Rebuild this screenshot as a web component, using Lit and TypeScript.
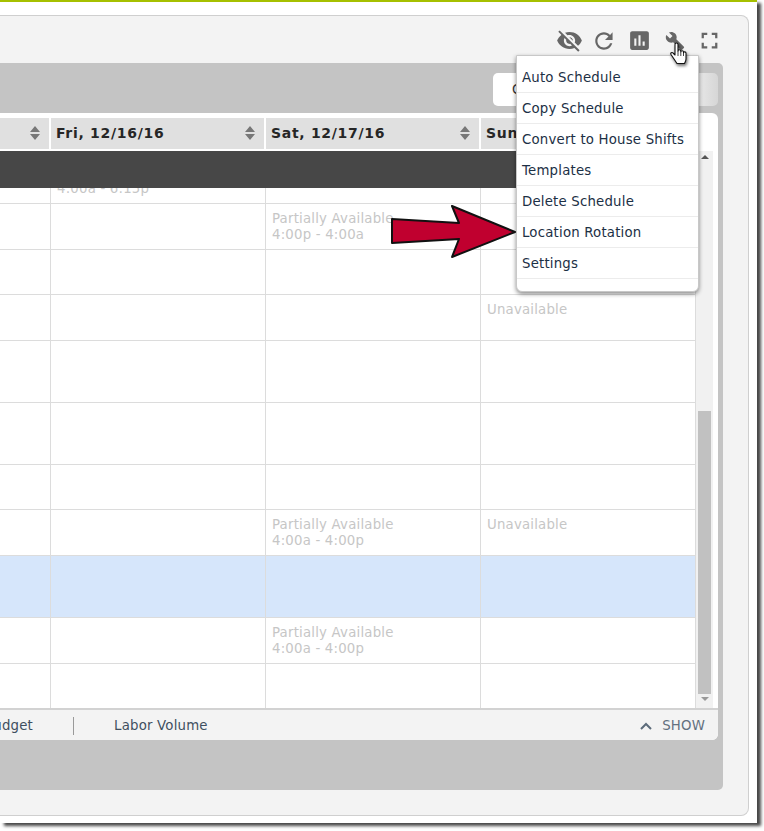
import { LitElement, html, css, svg, unsafeCSS } from "lit";
import { customElement } from "lit/decorators.js";

const FONT = unsafeCSS(`"DejaVu Sans", Verdana, sans-serif`);

const PA1 = ["Partially Available", "4:00p - 4:00a"];
const PA2 = ["Partially Available", "4:00a - 4:00p"];
const UN = ["Unavailable"];

type Row = { h: number; fri?: string[]; sat?: string[]; sun?: string[]; hi?: boolean };
const ROWS: Row[] = [
  { h: 46, fri: ["Partially Available", "4:00a - 6:15p"] },
  { h: 46, sat: PA1 },
  { h: 45 },
  { h: 46, sun: UN },
  { h: 62 },
  { h: 62 },
  { h: 45 },
  { h: 46, sat: PA2, sun: UN },
  { h: 62, hi: true },
  { h: 46, sat: PA2 },
  { h: 45 },
];

const MENU = ["Auto Schedule", "Copy Schedule", "Convert to House Shifts", "Templates", "Delete Schedule", "Location Rotation", "Settings"];

const ICONS: [string, number, string][] = [
  ["M12 7c2.76 0 5 2.24 5 5 0 .65-.13 1.26-.36 1.83l2.92 2.92c1.51-1.26 2.7-2.89 3.43-4.75-1.73-4.39-6-7.5-11-7.5-1.4 0-2.74.25-3.98.7l2.16 2.16C10.74 7.13 11.35 7 12 7zM2 4.27l2.28 2.28.46.46C3.08 8.3 1.78 10.02 1 12c1.73 4.39 6 7.5 11 7.5 1.55 0 3.03-.3 4.38-.84l.42.42L19.73 22 21 20.73 3.27 3 2 4.27zM7.53 9.8l1.55 1.55c-.05.21-.08.43-.08.65 0 1.66 1.34 3 3 3 .22 0 .44-.03.65-.08l1.55 1.55c-.67.33-1.41.53-2.2.53-2.76 0-5-2.24-5-5 0-.79.2-1.53.53-2.2zm4.31-.78l3.15 3.15.02-.16c0-1.66-1.34-3-3-3l-.17.01z", 27, "0 0 24 24"],
  ["M17.65 6.35C16.2 4.9 14.21 4 12 4c-4.42 0-7.99 3.58-7.99 8s3.57 8 7.99 8c3.73 0 6.84-2.55 7.73-6h-2.08c-.82 2.33-3.04 4-5.65 4-3.31 0-6-2.69-6-6s2.69-6 6-6c1.66 0 3.14.69 4.22 1.78L13 11h7V4l-2.35 2.35z", 26, "1 0 24 24"],
  ["M19 3H5c-1.1 0-2 .9-2 2v14c0 1.1.9 2 2 2h14c1.1 0 2-.9 2-2V5c0-1.1-.9-2-2-2zM9 17H7v-7h2v7zm4 0h-2V7h2v10zm4 0h-2v-4h2v4z", 25, "0 0 24 24"],
  ["M22.7 19l-9.1-9.1c.9-2.3.4-5-1.5-6.9-2-2-5-2.4-7.4-1.3L9 6 6 9 1.6 4.7C.4 7.1.9 10.1 2.9 12.1c1.9 1.9 4.6 2.4 6.9 1.5l9.1 9.1c.4.4 1 .4 1.4 0l2.3-2.3c.5-.4.5-1.1.1-1.4z", 20, "0 0 24 24"],
  ["M7 14H5v5h5v-2H7v-3zm-2-4h2V7h3V5H5v5zm12 7h-3v2h5v-5h-2v3zM14 5v2h3v3h2V5h-5z", 27, "0 0 24 24"],
];

const sortIcon = svg`<svg class="sort" width="10" height="14" viewBox="0 0 10 14"><path d="M5 0l5 6H0zM0 8h10l-5 6z" fill="#777"/></svg>`;

@customElement("app-root")
export class AppRoot extends LitElement {
  static styles = css`
    :host { display: block; width: 764px; height: 831px; background: #fff; overflow: hidden; font-family: ${FONT}; font-size: 13.3px; letter-spacing: .2px; color: #33475b; }
    * { box-sizing: border-box; }
    .frame { position: relative; width: 757px; height: 823px; background: #fff; border-top: 2px solid #a6c000; padding-top: 13px; box-shadow: 4px 3px 3px #484848; }
    .panel { width: 749px; height: 801px; background: #f3f3f3; border: 1px solid #cfcfcf; border-left: none; border-radius: 0 8px 8px 0; padding: 0 25px 25px 0; display: flex; flex-direction: column; }
    .toolbar { height: 47px; flex: none; display: flex; justify-content: flex-end; align-items: center; margin-right: -4px; padding-top: 2px; }
    .tool { width: 35px; display: flex; justify-content: center; align-items: center; }
    .tool svg { fill: #666; display: block; }
    .gray { flex: 1; background: #c4c4c4; border-radius: 0 5px 5px 0; padding: 10px 5px 50px 0; display: flex; flex-direction: column; min-height: 0; }
    .btnrow { height: 33px; flex: none; display: flex; justify-content: flex-end; margin-bottom: 7px; }
    .btn { width: 225px; height: 33px; border-radius: 5px; background: linear-gradient(90deg, #fff 0, #fff 88%, #e6e6e6 92%, #d6d6d6 100%); padding: 0 0 0 19px; line-height: 33px; color: #333; }
    .card { flex: 1; background: #fff; border-radius: 0 6px 6px 0; padding-top: 5px; display: flex; flex-direction: column; min-height: 0; overflow: hidden; }
    .head { height: 31px; flex: none; width: 696px; display: grid; grid-template-columns: 51px 215px 215px 215px; margin-bottom: 2px; }
    .hcell { background: #e0e0e0; border-right: 2px solid #fff; display: flex; align-items: center; justify-content: space-between; padding: 0 9px 1px 5px; font-size: 14px; letter-spacing: .7px; font-weight: bold; color: #262626; white-space: nowrap; overflow: hidden; }
    .hcell:first-child { justify-content: flex-end; }
    .sort { flex: none; }
    .mid { flex: 1; display: flex; min-height: 0; }
    .main { width: 696px; flex: none; display: flex; flex-direction: column; min-height: 0; }
    .dark { height: 37px; flex: none; background: #474747; position: relative; z-index: 1; }
    .rows { flex: 1; min-height: 0; overflow: hidden; }
    .rowlist { margin-top: -30px; }
    .row { display: grid; grid-template-columns: 51px 215px 215px 215px; border-bottom: 1px solid #dcdcdc; }
    .row:last-child { border-bottom: none; }
    .row.hi { background: #d6e6fb; }
    .cell { border-right: 1px solid #dcdcdc; padding: 7px 6px 0; color: #c6c6c6; line-height: 16px; white-space: nowrap; overflow: hidden; }
    .scroll { width: 17px; flex: none; background: #f1f1f1; display: flex; flex-direction: column; align-items: center; padding-top: 4px; }
    .scroll .up, .scroll .down { flex: none; display: block; }
    .track { flex: 1; width: 13px; display: flex; flex-direction: column; justify-content: flex-end; padding-bottom: 3px; margin-top: 3px; }
    .thumb { height: 283px; background: #c1c1c1; }
    .foot { height: 32px; flex: none; border-top: 2px solid #d2d2d2; background: #f3f3f3; padding-top: 1px; display: flex; align-items: center; color: #3f4f60; white-space: nowrap; overflow: hidden; }
    .budget { margin-left: -16px; padding-right: 40px; }
    .sep { width: 1px; height: 18px; background: #999; flex: none; }
    .labor { margin-left: 40px; }
    .show { margin-left: auto; display: flex; align-items: center; gap: 10px; padding-right: 13px; color: #62707f; }
    .menu { position: absolute; left: 516px; top: 53px; width: 183px; height: 237px; background: #fff; border: 1px solid #c8c8c8; border-radius: 0 0 6px 6px; box-shadow: 0 2px 4px rgba(0,0,0,.45); padding: 6px 0 0; z-index: 5; }
    .mi { height: 31px; padding-left: 5px; line-height: 31px; border-bottom: 1px solid #ececec; color: #1c3045; white-space: nowrap; }
    .arrow { position: absolute; left: 388px; top: 201px; z-index: 6; display: block; }
    .hand { position: absolute; left: 668px; top: 38px; z-index: 7; display: block; filter: drop-shadow(1px 2px 1.5px rgba(0,0,0,.55)); }
  `;

  render() {
    return html`
      <div class="frame">
        <div class="panel">
          <div class="toolbar">
            ${ICONS.map(([d, s, vb]) => html`<div class="tool"><svg width=${s} height=${s} viewBox=${vb}><path d=${d}/></svg></div>`)}
          </div>
          <div class="gray">
            <div class="btnrow"><div class="btn">Create</div></div>
            <div class="card">
              <div class="head">
                <div class="hcell">${sortIcon}</div>
                <div class="hcell"><span>Fri, 12/16/16</span>${sortIcon}</div>
                <div class="hcell"><span>Sat, 12/17/16</span>${sortIcon}</div>
                <div class="hcell"><span>Sun, 12/18/16</span>${sortIcon}</div>
              </div>
              <div class="mid">
                <div class="main">
                  <div class="dark"></div>
                  <div class="rows">
                    <div class="rowlist">
                      ${ROWS.map(r => html`
                        <div class="row ${r.hi ? "hi" : ""}" style="height:${r.h}px">
                          <div class="cell"></div>
                          <div class="cell">${(r.fri ?? []).map(t => html`<div>${t}</div>`)}</div>
                          <div class="cell">${(r.sat ?? []).map(t => html`<div>${t}</div>`)}</div>
                          <div class="cell">${(r.sun ?? []).map(t => html`<div>${t}</div>`)}</div>
                        </div>`)}
                    </div>
                  </div>
                </div>
                <div class="scroll">
                  <svg class="up" width="8" height="4" viewBox="0 0 8 4"><path d="M4 0l4 4H0z" fill="#555"/></svg>
                  <div class="track"><div class="thumb"></div></div>
                  <svg class="down" width="8" height="4" viewBox="0 0 8 4" style="margin-bottom:7px"><path d="M0 0h8L4 4z" fill="#999"/></svg>
                </div>
              </div>
              <div class="foot">
                <span class="budget">Budget</span>
                <span class="sep"></span>
                <span class="labor">Labor Volume</span>
                <span class="show">
                  <svg width="12" height="8" viewBox="0 0 12 8"><path d="M1 7l5-5 5 5" fill="none" stroke="#5c6b7a" stroke-width="2"/></svg>
                  SHOW
                </span>
              </div>
            </div>
          </div>
        </div>
        <div class="menu">${MENU.map(m => html`<div class="mi">${m}</div>`)}</div>
        <svg class="arrow" width="130" height="56" viewBox="388 203 130 56">
          <path d="M392 219 459 223 452 206 515 232 452 257 459 239 392 243z" fill="#c0002f" stroke="#111" stroke-width="2" stroke-linejoin="round"/>
        </svg>
        <svg class="hand" width="22" height="28" viewBox="0 0 22 28">
          <path d="M6 19 3 14.500c-.9-1.500 1-2.600 2-1.500L7 15V4.500c0-2 3-2 3 0V11c0-1.600 2.800-1.600 2.800 0v.8c0-1.500 2.700-1.500 2.700 0v1c0-1.300 2.500-1.300 2.500.3V19c0 2-.8 3-1.500 4.500H9C8 22 7 20.500 6 19z" fill="#fff" stroke="#111" stroke-width="1.100" stroke-linejoin="round"/>
          <path d="M10 11v5M12.800 11.800V16M15.500 12.800V16" stroke="#111" stroke-width=".8" fill="none"/>
        </svg>
      </div>
    `;
  }
}
